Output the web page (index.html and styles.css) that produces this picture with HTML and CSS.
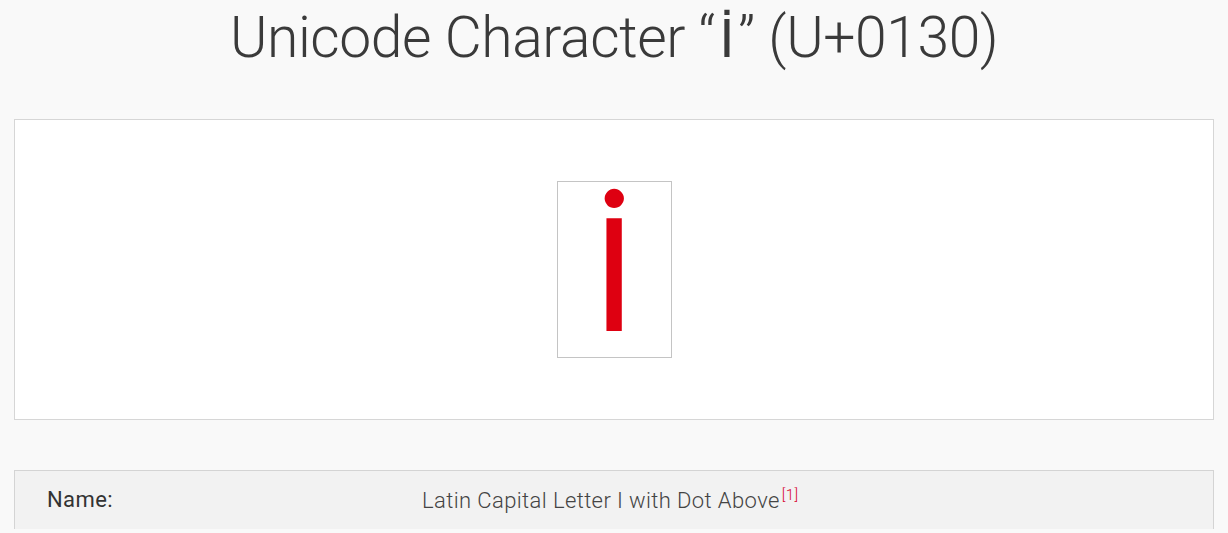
FILE: index.html
```html
<!DOCTYPE html>
<html lang="en">
<head>
    <meta charset="UTF-8">
    <meta name="viewport" content="width=device-width, initial-scale=1.0">
    <title>Unicode Character U+0130</title>
    <link rel="stylesheet" href="styles.css">
</head>
<body>
    <div class="page">
        <h1 class="title">Unicode Character “<span class="title-char">İ</span>” (U+0130)</h1>

        <div class="preview">
            <div class="glyph-box">
                <span class="glyph">İ</span>
            </div>
        </div>

        <table class="info">
            <tr>
                <th>Name:</th>
                <td>Latin Capital Letter I with Dot Above<sup><a href="#ref1">[1]</a></sup></td>
            </tr>
        </table>
    </div>
</body>
</html>
```

FILE: styles.css
```css
html, body {
    margin: 0;
    padding: 0;
}

body {
    background: #f9f9f9;
    font-family: Roboto, "Liberation Sans", sans-serif;
    color: #333;
}

.page {
    padding: 0 14px;
}

.title {
    margin: 0;
    padding: 0;
    height: 119px;
    box-sizing: border-box;
    text-align: center;
    font-weight: 300;
    font-size: 57px;
    letter-spacing: -0.4px;
    line-height: 76px;
    color: #3a3a3a;
}

.title .title-char {
    font-family: "DejaVu Sans", sans-serif;
    font-weight: normal;
    font-size: 52px;
    padding: 0 4px;
}

.preview {
    background: #fff;
    border: 1px solid #d6d6d6;
    height: 299px;
    display: flex;
    justify-content: center;
    align-items: center;
}

.glyph-box {
    width: 113px;
    height: 175px;
    border: 1px solid #c4c4c4;
    display: flex;
    justify-content: center;
    align-items: center;
}

.glyph {
    font-family: Lato, "Open Sans", sans-serif;
    font-weight: 400;
    font-size: 158px;
    line-height: 170px;
    color: #de0011;
}

.info {
    width: 100%;
    margin-top: 50px;
    border-collapse: collapse;
    border-top: 1px solid #d4d4d4;
    border-left: 1px solid #d4d4d4;
    border-right: 1px solid #d4d4d4;
    background: #f2f2f2;
    font-size: 22px;
    letter-spacing: 0.4px;
}

.info th {
    width: 375px;
    text-align: left;
    font-weight: 400;
    padding: 15px 0 16px 32px;
    color: #333;
}

.info td {
    font-weight: 300;
    color: #444;
    padding: 15px 0 16px;
}

.info sup {
    font-size: 15px;
    margin-left: 2px;
}

.info sup a {
    color: #d8002e;
    text-decoration: none;
}
```
